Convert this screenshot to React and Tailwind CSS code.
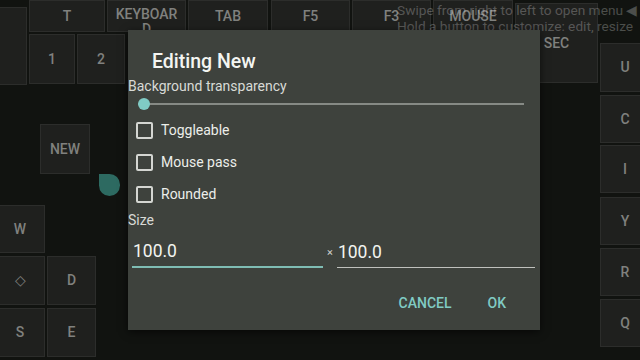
import React from 'react';

const keys = [
  { x: -10, y: 7, w: 37, h: 78, label: '' },
  { x: 29, y: 0, w: 76, h: 32, label: 'T' },
  { x: 107, y: 0, w: 79, h: 32, label: 'KEYBOARD', wrap: true },
  { x: 188, y: 0, w: 80, h: 32, label: 'TAB' },
  { x: 271, y: 0, w: 79, h: 32, label: 'F5' },
  { x: 352, y: 0, w: 79, h: 32, label: 'F3' },
  { x: 433, y: 0, w: 80, h: 32, label: 'MOUSE' },
  { x: 515, y: 3, w: 83, h: 80, label: 'SEC' },
  { x: 29, y: 34, w: 46, h: 50, label: '1' },
  { x: 77, y: 34, w: 48, h: 50, label: '2' },
  { x: 40, y: 124, w: 50, h: 50, label: 'NEW' },
  { x: -5, y: 205, w: 50, h: 48, label: 'W' },
  { x: -5, y: 256, w: 50, h: 49, label: '◇' },
  { x: 47, y: 256, w: 49, h: 49, label: 'D' },
  { x: -5, y: 308, w: 50, h: 49, label: 'S' },
  { x: 47, y: 308, w: 49, h: 49, label: 'E' },
  { x: 600, y: 43, w: 50, h: 49, label: 'U' },
  { x: 600, y: 95, w: 50, h: 48, label: 'C' },
  { x: 600, y: 145, w: 50, h: 48, label: 'I' },
  { x: 600, y: 197, w: 50, h: 48, label: 'Y' },
  { x: 600, y: 248, w: 50, h: 48, label: 'R' },
  { x: 600, y: 299, w: 50, h: 48, label: 'Q' },
];

function Key({ k }) {
  return (
    <div
      className="absolute flex items-center justify-center overflow-hidden bg-[#1f201e] border border-[#2c2d2b] text-[#80817e] text-[14px] font-medium leading-[15px] text-center"
      style={{ left: k.x, top: k.y, width: k.w, height: k.h }}
    >
      {k.wrap ? (
        <span className="mt-[12px]">KEYBOAR<br />D</span>
      ) : (
        k.label
      )}
    </div>
  );
}

function Check({ label }) {
  return (
    <div className="flex items-center h-[32px] pl-[8px]">
      <div className="w-[17px] h-[17px] border-2 border-[#d4d6d2] rounded-[2px]" />
      <span className="ml-[8px] text-[14px] text-[#eceeea]">{label}</span>
    </div>
  );
}

export default function App() {
  return (
    <div
      className="relative w-[640px] h-[360px] overflow-hidden bg-[#111310]"
      style={{ fontFamily: 'Roboto, "Noto Sans", sans-serif' }}
    >
      {keys.map((k, i) => <Key key={i} k={k} />)}

      <div className="absolute left-[397px] top-[2px] text-[13.7px] leading-[16px] text-white/25 whitespace-nowrap">
        <div>Swipe from right to left to open menu ◀</div>
        <div>Hold a button to customize: edit, resize</div>
      </div>

      {/* selection handle */}
      <div className="absolute left-[99px] top-[174px] w-[21px] h-[22px] bg-[#2d6a61] rounded-full rounded-tl-[5px]" />

      <div className="absolute left-[128px] top-[30px] w-[412px] h-[300px] bg-[#3e423d] shadow-[0_2px_8px_rgba(0,0,0,0.6)] flex flex-col text-[#e6e8e4]">
        <div className="pl-[24px] pt-[20px] text-[19.5px] leading-[24px] font-medium text-[#f4f5f2]">Editing New</div>
        <div className="mt-[4px] text-[14px] leading-[16px] text-[#d8dad6]">Background transparency</div>

        <div className="relative h-[14px] mt-[3px] ml-[10px] mr-[16px] flex items-center">
          <div className="flex-1 h-[2px] bg-[#868a85]" />
          <div className="absolute left-0 w-[12px] h-[12px] rounded-full bg-[#80cbc4]" />
        </div>

        <div className="mt-[3px] flex flex-col">
          <Check label="Toggleable" />
          <Check label="Mouse pass" />
          <Check label="Rounded" />
        </div>

        <div className="mt-[2px] text-[14px] leading-[16px] text-[#d8dad6]">Size</div>

        <div className="mt-[13px] flex items-end">
          <div className="ml-[4px] w-[191px] border-b-2 border-[#7fbdb4] pb-[5px] pl-[1px] text-[17.5px] leading-[20px] text-[#f2f4f0]">100.0</div>
          <span className="ml-[4px] mb-[9px] text-[11px] leading-[12px] text-[#d0d2ce]">×</span>
          <div className="ml-[4px] w-[198px] border-b border-[#bfc1bd] pb-[5px] pl-[1px] text-[17.5px] leading-[20px] text-[#f2f4f0]">100.0</div>
        </div>

        <div className="mt-[27px] flex justify-end pr-[34px] gap-[36px] text-[14px] leading-[16px] font-medium text-[#80cbc4]">
          <span>CANCEL</span>
          <span>OK</span>
        </div>
      </div>
    </div>
  );
}
